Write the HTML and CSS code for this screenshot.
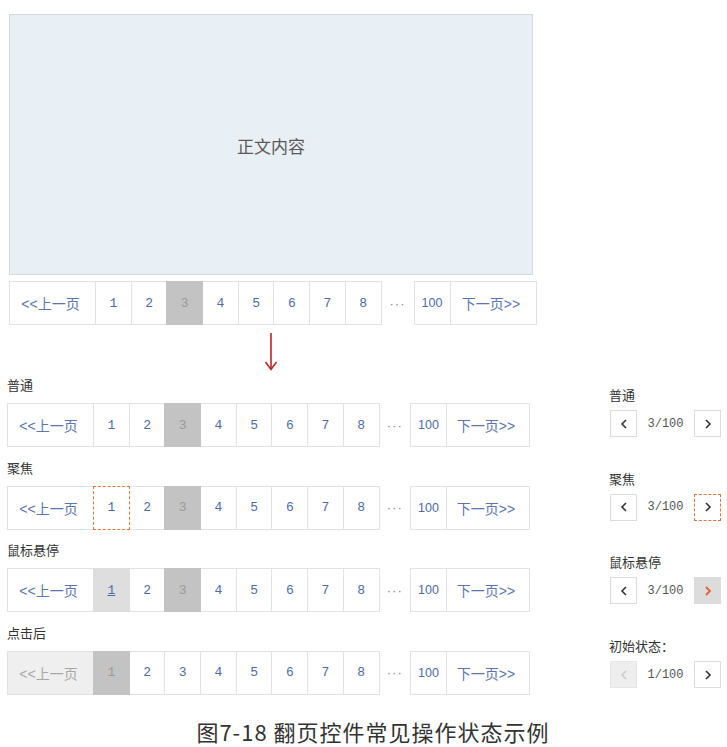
FILE: index.html
```html
<!DOCTYPE html>
<html lang="zh">
<head>
<meta charset="utf-8">
<link rel="stylesheet" href="styles.css">
</head>
<body>
<div class="page">
  <div class="content-box"><span>正文内容</span></div>

  <div class="pager pager-top">
    <div class="group">
      <span class="cell prev">&lt;&lt;上一页</span>
      <span class="cell num">1</span>
      <span class="cell num">2</span>
      <span class="cell num current">3</span>
      <span class="cell num">4</span>
      <span class="cell num">5</span>
      <span class="cell num">6</span>
      <span class="cell num">7</span>
      <span class="cell num">8</span>
    </div>
    <span class="dots">···</span>
    <div class="group">
      <span class="cell hundred">100</span>
      <span class="cell next">下一页&gt;&gt;</span>
    </div>
  </div>

  <div class="arrow">
    <svg width="16" height="38" viewBox="0 0 16 38"><line x1="8" y1="0" x2="8" y2="36" stroke="#b8262b" stroke-width="1.6"/><polyline points="2.5,29 8,36.5 13.5,29" fill="none" stroke="#b8262b" stroke-width="1.6"/></svg>
  </div>

  <div class="states">
    <div class="left-col">
      <div class="state">
        <div class="label">普通</div>
        <div class="pager">
          <div class="group">
            <span class="cell prev">&lt;&lt;上一页</span>
            <span class="cell num">1</span>
            <span class="cell num">2</span>
            <span class="cell num current">3</span>
            <span class="cell num">4</span>
            <span class="cell num">5</span>
            <span class="cell num">6</span>
            <span class="cell num">7</span>
            <span class="cell num">8</span>
          </div>
          <span class="dots">···</span>
          <div class="group">
            <span class="cell hundred">100</span>
            <span class="cell next">下一页&gt;&gt;</span>
          </div>
        </div>
      </div>
      <div class="state">
        <div class="label">聚焦</div>
        <div class="pager">
          <div class="group">
            <span class="cell prev">&lt;&lt;上一页</span>
            <span class="cell num focus">1</span>
            <span class="cell num">2</span>
            <span class="cell num current">3</span>
            <span class="cell num">4</span>
            <span class="cell num">5</span>
            <span class="cell num">6</span>
            <span class="cell num">7</span>
            <span class="cell num">8</span>
          </div>
          <span class="dots">···</span>
          <div class="group">
            <span class="cell hundred">100</span>
            <span class="cell next">下一页&gt;&gt;</span>
          </div>
        </div>
      </div>
      <div class="state">
        <div class="label">鼠标悬停</div>
        <div class="pager">
          <div class="group">
            <span class="cell prev">&lt;&lt;上一页</span>
            <span class="cell num hover">1</span>
            <span class="cell num">2</span>
            <span class="cell num current">3</span>
            <span class="cell num">4</span>
            <span class="cell num">5</span>
            <span class="cell num">6</span>
            <span class="cell num">7</span>
            <span class="cell num">8</span>
          </div>
          <span class="dots">···</span>
          <div class="group">
            <span class="cell hundred">100</span>
            <span class="cell next">下一页&gt;&gt;</span>
          </div>
        </div>
      </div>
      <div class="state">
        <div class="label">点击后</div>
        <div class="pager">
          <div class="group">
            <span class="cell prev disabled">&lt;&lt;上一页</span>
            <span class="cell num current">1</span>
            <span class="cell num">2</span>
            <span class="cell num">3</span>
            <span class="cell num">4</span>
            <span class="cell num">5</span>
            <span class="cell num">6</span>
            <span class="cell num">7</span>
            <span class="cell num">8</span>
          </div>
          <span class="dots">···</span>
          <div class="group">
            <span class="cell hundred">100</span>
            <span class="cell next">下一页&gt;&gt;</span>
          </div>
        </div>
      </div>
    </div>

    <div class="right-col">
      <div class="mini-state">
        <div class="label">普通</div>
        <div class="mini">
          <span class="mbtn"><svg width="8" height="10" viewBox="0 0 8 10"><polyline points="6,1 2,5 6,9" fill="none" stroke="#333" stroke-width="1.6"/></svg></span>
          <span class="mtext">3/100</span>
          <span class="mbtn"><svg width="8" height="10" viewBox="0 0 8 10"><polyline points="2,1 6,5 2,9" fill="none" stroke="#333" stroke-width="1.6"/></svg></span>
        </div>
      </div>
      <div class="mini-state">
        <div class="label">聚焦</div>
        <div class="mini">
          <span class="mbtn"><svg width="8" height="10" viewBox="0 0 8 10"><polyline points="6,1 2,5 6,9" fill="none" stroke="#333" stroke-width="1.6"/></svg></span>
          <span class="mtext">3/100</span>
          <span class="mbtn focus"><svg width="8" height="10" viewBox="0 0 8 10"><polyline points="2,1 6,5 2,9" fill="none" stroke="#333" stroke-width="1.6"/></svg></span>
        </div>
      </div>
      <div class="mini-state">
        <div class="label">鼠标悬停</div>
        <div class="mini">
          <span class="mbtn"><svg width="8" height="10" viewBox="0 0 8 10"><polyline points="6,1 2,5 6,9" fill="none" stroke="#333" stroke-width="1.6"/></svg></span>
          <span class="mtext">3/100</span>
          <span class="mbtn hover"><svg width="8" height="10" viewBox="0 0 8 10"><polyline points="2,1 6,5 2,9" fill="none" stroke="#e5603a" stroke-width="1.8"/></svg></span>
        </div>
      </div>
      <div class="mini-state">
        <div class="label">初始状态：</div>
        <div class="mini">
          <span class="mbtn disabled"><svg width="8" height="10" viewBox="0 0 8 10"><polyline points="6,1 2,5 6,9" fill="none" stroke="#c8c8c8" stroke-width="1.4"/></svg></span>
          <span class="mtext">1/100</span>
          <span class="mbtn"><svg width="8" height="10" viewBox="0 0 8 10"><polyline points="2,1 6,5 2,9" fill="none" stroke="#333" stroke-width="1.6"/></svg></span>
        </div>
      </div>
    </div>
  </div>

  <div class="caption">图7-18 翻页控件常见操作状态示例</div>
</div>
</body>
</html>
```

FILE: styles.css
```css
* { box-sizing: border-box; }
html, body { margin: 0; padding: 0; background: #fff; }
body {
  width: 727px;
  height: 747px;
  overflow: hidden;
  font-family: "Noto Sans CJK SC", "Liberation Sans", sans-serif;
  color: #333;
}
.page { padding-top: 14px; }

.content-box {
  margin-left: 9px;
  width: 524px;
  height: 261px;
  background: #e9f0f5;
  border: 1px solid #d3d9dd;
  display: flex;
  align-items: center;
  justify-content: center;
  font-size: 17px;
  color: #5a5a5a;
  padding-top: 1px;
}

/* Pager */
.pager {
  display: flex;
  align-items: stretch;
  height: 44px;
}
.pager-top { margin: 6px 0 0 9px; }
.group { display: flex; }
.cell {
  display: flex;
  align-items: center;
  justify-content: center;
  height: 44px;
  border: 1px solid #e3e3e3;
  background: #fff;
  color: #4d6ca6;
  margin-left: -1px;
  position: relative;
}
.group .cell:first-child { margin-left: 0; }
.prev, .next {
  font-family: "Liberation Sans", "Noto Sans CJK SC", sans-serif;
  font-size: 14px;
  color: #5a76ae;
}
.prev { width: 87px; padding-right: 4px; }
.next { width: 84px; padding-right: 4px; }
.pager-top .next { width: 87px; }
.num {
  width: 36.7px;
  font-family: "Liberation Mono", monospace;
  font-size: 13px;
}
.hundred {
  width: 37px;
  font-family: "Liberation Sans", sans-serif;
  font-size: 12.5px;
}
.dots {
  width: 31px;
  display: flex;
  align-items: center;
  justify-content: center;
  color: #8a8a8a;
  font-size: 13px;
  letter-spacing: 1px;
  font-family: "Liberation Sans", sans-serif;
}
.pager-top .dots { width: 32px; }
.current { background: #c3c3c3; color: #9a9a9a; border-color: #c3c3c3; z-index: 1; }
.hover { background: #dedede; text-decoration: underline; border-color: #dedede; z-index: 1; }
.focus { border: 1px dashed #e0763f; z-index: 2; }
.disabled { background: #efefef; color: #a8a8a8; }

.arrow { margin: 8px 0 0 263px; height: 38px; }
.arrow svg { display: block; }

/* States */
.states {
  display: flex;
  align-items: flex-start;
  margin-top: 6px;
}
.left-col { margin-left: 7px; width: 523px; }
.state { margin-bottom: 12.67px; }
.state:last-child { margin-bottom: 0; }
.label {
  font-size: 13px;
  line-height: 16px;
  height: 16px;
  color: #333;
}
.state .label { margin: 0 0 10px 0; }

.right-col { margin-left: 79px; padding-top: 10px; }
.mini-state { height: 83.7px; }
.mini-state:last-child { height: auto; }
.mini-state .label { margin-bottom: 7px; }
.mini { display: flex; align-items: center; height: 27px; margin-left: 1px; }
.mbtn {
  width: 27px;
  height: 27px;
  border: 1px solid #dcdcdc;
  background: #fff;
  display: flex;
  align-items: center;
  justify-content: center;
}
.mbtn svg { display: block; }
.mbtn.focus { border: 1px dashed #e0763f; }
.mbtn.hover { background: #dcdcdc; border-color: #dcdcdc; }
.mbtn.disabled { background: #eeeeee; border-color: #e6e6e6; }
.mtext {
  width: 57px;
  text-align: center;
  font-family: "Liberation Mono", monospace;
  font-size: 12px;
  color: #555;
}

.caption {
  margin-top: 21px;
  padding-left: 19px;
  text-align: center;
  font-size: 22px;
  line-height: 30px;
  letter-spacing: 1px;
  color: #333;
}
```
